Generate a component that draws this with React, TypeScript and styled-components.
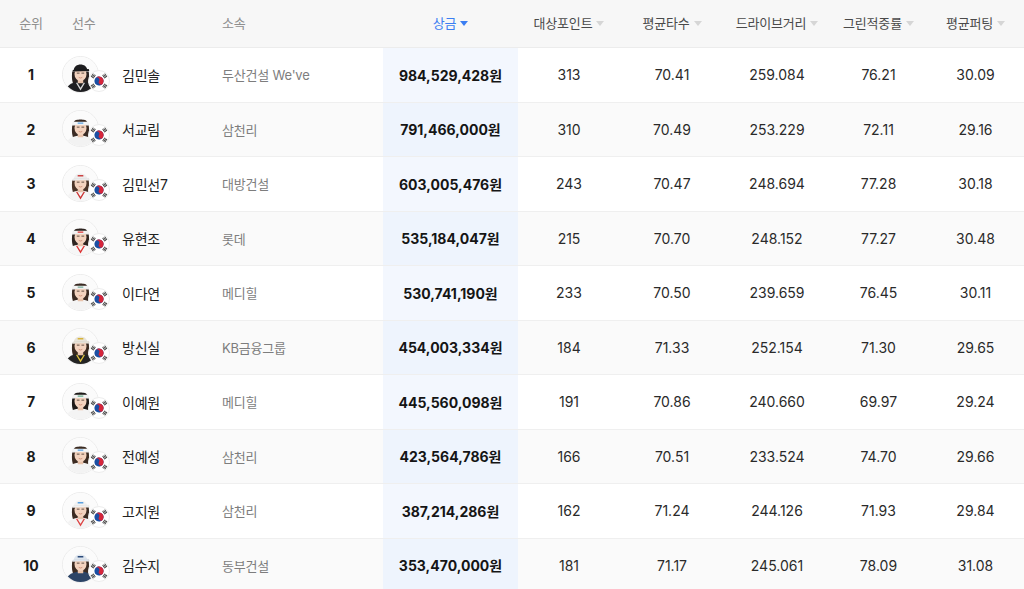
import React from 'react';
import styled, { createGlobalStyle } from 'styled-components';

const GlobalStyle = createGlobalStyle`
  html, body {
    margin: 0;
    padding: 0;
    background: #fff;
  }
  body {
    font-family: Inter, 'Noto Sans CJK KR', 'Noto Sans', sans-serif;
    color: #222;
  }
`;

const COLUMNS = '62px 160px 161px 135px 102px 104px 106px 97px 97px';

interface Look {
  hat: 'cap' | 'visor';
  hatColor: string;
  hatAccent?: string;
  hair: string;
  shirt: string;
  shirtAccent?: string;
}

interface Player {
  rank: number;
  name: string;
  team: string;
  prize: string;
  points: number;
  avg: string;
  drive: string;
  green: string;
  putt: string;
  look: Look;
}

const players: Player[] = [
  { rank: 1, name: '김민솔', team: "두산건설 We've", prize: '984,529,428원', points: 313, avg: '70.41', drive: '259.084', green: '76.21', putt: '30.09', look: { hat: 'cap', hatColor: '#1d1d1f', hair: '#2a2220', shirt: '#1f1f22', shirtAccent: '#d9d9d9' } },
  { rank: 2, name: '서교림', team: '삼천리', prize: '791,466,000원', points: 310, avg: '70.49', drive: '253.229', green: '72.11', putt: '29.16', look: { hat: 'visor', hatColor: '#f4f6f8', hatAccent: '#5aa0e0', hair: '#3a2b24', shirt: '#f2f2f2' } },
  { rank: 3, name: '김민선7', team: '대방건설', prize: '603,005,476원', points: 243, avg: '70.47', drive: '248.694', green: '77.28', putt: '30.18', look: { hat: 'cap', hatColor: '#eeeeee', hatAccent: '#c44', hair: '#4a3428', shirt: '#f5f5f5', shirtAccent: '#c33' } },
  { rank: 4, name: '유현조', team: '롯데', prize: '535,184,047원', points: 215, avg: '70.70', drive: '248.152', green: '77.27', putt: '30.48', look: { hat: 'visor', hatColor: '#f3f3f3', hatAccent: '#d33', hair: '#2e2420', shirt: '#f6f6f6', shirtAccent: '#d33' } },
  { rank: 5, name: '이다연', team: '메디힐', prize: '530,741,190원', points: 233, avg: '70.50', drive: '239.659', green: '76.45', putt: '30.11', look: { hat: 'visor', hatColor: '#f5f5f5', hatAccent: '#7a9', hair: '#3a2a22', shirt: '#f4f4f4' } },
  { rank: 6, name: '방신실', team: 'KB금융그룹', prize: '454,003,334원', points: 184, avg: '71.33', drive: '252.154', green: '71.30', putt: '29.65', look: { hat: 'cap', hatColor: '#e8e4da', hatAccent: '#d7b43a', hair: '#3a2a20', shirt: '#232323', shirtAccent: '#e0c23a' } },
  { rank: 7, name: '이예원', team: '메디힐', prize: '445,560,098원', points: 191, avg: '70.86', drive: '240.660', green: '69.97', putt: '29.24', look: { hat: 'visor', hatColor: '#f4f4f4', hatAccent: '#6a8', hair: '#1e1a18', shirt: '#f4f4f4' } },
  { rank: 8, name: '전예성', team: '삼천리', prize: '423,564,786원', points: 166, avg: '70.51', drive: '233.524', green: '74.70', putt: '29.66', look: { hat: 'visor', hatColor: '#f4f6f8', hatAccent: '#5aa0e0', hair: '#3b2b22', shirt: '#f3f3f3' } },
  { rank: 9, name: '고지원', team: '삼천리', prize: '387,214,286원', points: 162, avg: '71.24', drive: '244.126', green: '71.93', putt: '29.84', look: { hat: 'cap', hatColor: '#f2f2f2', hatAccent: '#5aa0e0', hair: '#3b2b22', shirt: '#f3f3f3', shirtAccent: '#d44' } },
  { rank: 10, name: '김수지', team: '동부건설', prize: '353,470,000원', points: 181, avg: '71.17', drive: '245.061', green: '78.09', putt: '31.08', look: { hat: 'cap', hatColor: '#dfe6ee', hatAccent: '#2b4a7a', hair: '#3b2b22', shirt: '#2c4466' } },
];

const Table = styled.div`
  width: 1024px;
  overflow: hidden;
`;

const HeaderRow = styled.div`
  display: grid;
  grid-template-columns: ${COLUMNS};
  height: 48px;
  background: #f7f7f7;
  border-bottom: 1px solid #ececec;
  box-sizing: border-box;
`;

const HeadCell = styled.div<{ $align?: 'left' | 'center'; $indent?: number; $tone?: 'muted' | 'strong' | 'active' }>`
  display: flex;
  align-items: center;
  justify-content: ${(p) => (p.$align === 'left' ? 'flex-start' : 'center')};
  padding-left: ${(p) => p.$indent ?? 0}px;
  padding-bottom: 3px;
  gap: 4px;
  font-size: 13px;
  letter-spacing: -0.2px;
  color: ${(p) => (p.$tone === 'active' ? '#3b7ef2' : p.$tone === 'strong' ? '#4a4a4a' : '#8f8f8f')};
`;

const SortArrow = styled.span<{ $active?: boolean }>`
  display: inline-block;
  width: 0;
  height: 0;
  margin-top: 3px;
  border-left: 4px solid transparent;
  border-right: 4px solid transparent;
  border-top: 5px solid ${(p) => (p.$active ? '#3b7ef2' : '#d6d6d6')};
`;

const Row = styled.div<{ $alt: boolean }>`
  display: grid;
  grid-template-columns: ${COLUMNS};
  height: 54.5px;
  box-sizing: border-box;
  border-bottom: 1px solid #efefef;
  background: ${(p) => (p.$alt ? '#fafafa' : '#ffffff')};
`;

const Cell = styled.div<{ $align?: 'left' | 'center'; $highlight?: boolean; $alt?: boolean }>`
  display: flex;
  align-items: center;
  justify-content: ${(p) => (p.$align === 'left' ? 'flex-start' : 'center')};
  font-size: 14px;
  color: #2a2a2a;
  background: ${(p) => (p.$highlight ? (p.$alt ? '#eef4fd' : '#f3f7fe') : 'transparent')};
`;

const Rank = styled(Cell)`
  font-weight: 700;
  color: #1a1a1a;
`;

const PlayerCell = styled(Cell)`
  gap: 12px;
`;

const AvatarWrap = styled.div`
  position: relative;
  width: 48px;
  height: 38px;
  flex-shrink: 0;
`;

const Avatar = styled.div`
  width: 37px;
  height: 37px;
  border-radius: 50%;
  overflow: hidden;
  border: 1px solid #ececec;
  background: #fff;
  box-sizing: border-box;

  svg {
    display: block;
  }
`;

const FlagBadge = styled.div`
  position: absolute;
  left: 26px;
  top: 14px;
  width: 22px;
  height: 22px;
  border-radius: 50%;
  background: #fff;
  border: 1px solid #ededed;
  box-sizing: border-box;
  display: flex;
  align-items: center;
  justify-content: center;
`;

const Name = styled.span`
  font-size: 14px;
  color: #222;
  letter-spacing: -0.2px;
`;

const Team = styled(Cell)`
  font-size: 13px;
  color: #7d7d7d;
  letter-spacing: -0.2px;
`;

const Prize = styled(Cell)`
  font-weight: 700;
  color: #151515;
`;

const Portrait: React.FC<{ look: Look }> = ({ look }) => (
  <svg width="35" height="35" viewBox="0 0 36 36">
    <rect width="36" height="36" fill="#fbfbfb" />
    <path d="M9.5 15 C8.5 23 10 28 12 30 L24 30 C26 28 27.5 23 26.5 15 Z" fill={look.hair} />
    <path d="M2 37 C4 28 10 25.5 18 25.5 C26 25.5 32 28 34 37 Z" fill={look.shirt} />
    {look.shirtAccent && <path d="M14 26.5 L18 33 L22 26.5" stroke={look.shirtAccent} strokeWidth="1.4" fill="none" />}
    <rect x="15.2" y="21" width="5.6" height="6" fill="#e9c3ab" />
    <ellipse cx="18" cy="17.5" rx="6.2" ry="7.2" fill="#f3d3bf" />
    <path d="M14.6 16.6 L16.6 16.6" stroke="#3a2a22" strokeWidth="0.8" strokeLinecap="round" />
    <path d="M19.4 16.6 L21.4 16.6" stroke="#3a2a22" strokeWidth="0.8" strokeLinecap="round" />
    <path d="M16.2 21 Q18 22.2 19.8 21" stroke="#c9866f" strokeWidth="0.8" fill="none" />
    {look.hat === 'cap' ? (
      <>
        <path d="M11 14 C11 5.5 25 5.5 25 14 Z" fill={look.hatColor} />
        <path d="M10 13.3 L26.5 12.4 L27 14.4 L10 15 Z" fill={look.hatColor} stroke="rgba(0,0,0,0.12)" strokeWidth="0.4" />
        {look.hatAccent && <rect x="15" y="9.2" width="6" height="1.7" rx="0.6" fill={look.hatAccent} />}
      </>
    ) : (
      <>
        <path d="M11.5 11 C11.5 8 24.5 8 24.5 11 L24.5 13.4 L11.5 13.4 Z" fill={look.hair} />
        <path d="M10.6 11 L25.4 11 L26.4 14.3 L9.8 14.3 Z" fill={look.hatColor} stroke="rgba(0,0,0,0.1)" strokeWidth="0.4" />
        {look.hatAccent && <rect x="15" y="11.7" width="6" height="1.3" rx="0.5" fill={look.hatAccent} />}
      </>
    )}
  </svg>
);

const Trigram: React.FC<{ x: number; y: number; angle: number }> = ({ x, y, angle }) => (
  <g transform={`translate(${x} ${y}) rotate(${angle})`}>
    <rect x="-2" y="-1.6" width="4" height="0.75" fill="#222" />
    <rect x="-2" y="-0.35" width="4" height="0.75" fill="#222" />
    <rect x="-2" y="0.9" width="4" height="0.75" fill="#222" />
  </g>
);

const KoreaFlag: React.FC = () => (
  <svg width="20" height="20" viewBox="0 0 20 20">
    <g transform="rotate(33 10 10)">
      <circle cx="10" cy="10" r="4.6" fill="#1b4fa3" />
      <path d="M5.4 10 A4.6 4.6 0 0 1 14.6 10 A2.3 2.3 0 0 1 10 10 A2.3 2.3 0 0 0 5.4 10 Z" fill="#d6263a" />
    </g>
    <Trigram x={4.2} y={5} angle={-56} />
    <Trigram x={15.8} y={5} angle={56} />
    <Trigram x={4.2} y={15} angle={56} />
    <Trigram x={15.8} y={15} angle={-56} />
  </svg>
);

const statHeaders = ['대상포인트', '평균타수', '드라이브거리', '그린적중률', '평균퍼팅'];

const App: React.FC = () => (
  <>
    <GlobalStyle />
    <Table>
      <HeaderRow>
        <HeadCell>순위</HeadCell>
        <HeadCell $align="left" $indent={10}>선수</HeadCell>
        <HeadCell $align="left">소속</HeadCell>
        <HeadCell $tone="active">
          상금
          <SortArrow $active />
        </HeadCell>
        {statHeaders.map((h) => (
          <HeadCell key={h} $tone="strong">
            {h}
            <SortArrow />
          </HeadCell>
        ))}
      </HeaderRow>
      {players.map((p, i) => {
        const alt = i % 2 === 1;
        return (
          <Row key={p.rank} $alt={alt}>
            <Rank>{p.rank}</Rank>
            <PlayerCell $align="left">
              <AvatarWrap>
                <Avatar>
                  <Portrait look={p.look} />
                </Avatar>
                <FlagBadge>
                  <KoreaFlag />
                </FlagBadge>
              </AvatarWrap>
              <Name>{p.name}</Name>
            </PlayerCell>
            <Team $align="left">{p.team}</Team>
            <Prize $highlight $alt={alt}>{p.prize}</Prize>
            <Cell>{p.points}</Cell>
            <Cell>{p.avg}</Cell>
            <Cell>{p.drive}</Cell>
            <Cell>{p.green}</Cell>
            <Cell>{p.putt}</Cell>
          </Row>
        );
      })}
    </Table>
  </>
);

export default App;
